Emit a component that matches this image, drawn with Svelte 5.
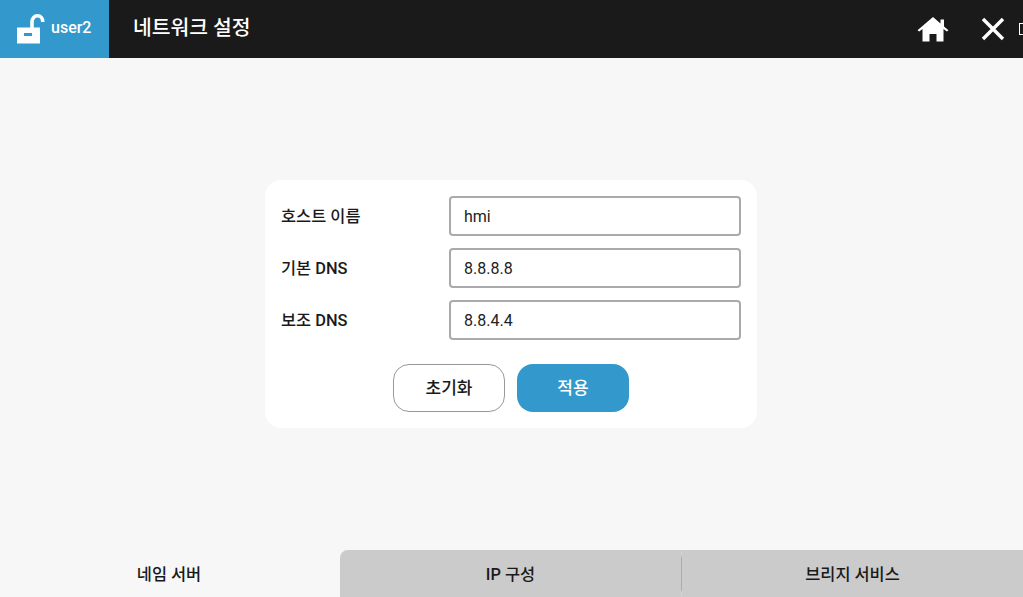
<script>
  let host = $state('hmi');
  let dns1 = $state('8.8.8.8');
  let dns2 = $state('8.8.4.4');
</script>

<div class="page">
  <header class="top">
    <div class="user">
      <svg class="lock" width="28" height="30" viewBox="0 0 28 30">
        <path d="M0 13.500h23v16H0z" fill="#fff"/>
        <path d="M15 14V8C15 4 17.500 1.800 20.500 1.800S25.800 4 25.800 8" fill="none" stroke="#fff" stroke-width="3.600"/>
        <rect x="7" y="19" width="8" height="3" fill="#3399cc"/>
      </svg>
      <span class="name">user2</span>
    </div>
    <h1>네트워크 설정</h1>
    <div class="actions">
      <svg class="home" width="32" height="26" viewBox="0 0 32 26">
        <path d="M16 1 L23.500 7.500V3.500h3.500v7L31.500 14.300 29.800 15.500 26.500 13V25.500H19.500V18h-7v7.500H5.500V13L2.200 15.500 0.500 14.300Z" fill="#fff"/>
      </svg>
      <svg class="close" width="24" height="24" viewBox="0 0 24 24">
        <path d="M2 2L22 22M22 2L2 22" stroke="#fff" stroke-width="3.400" fill="none"/>
      </svg>
      <span class="tofu"></span>
    </div>
  </header>

  <main class="content">
    <form class="card">
      <label class="row"><span>호스트 이름</span><input bind:value={host} /></label>
      <label class="row"><span>기본 DNS</span><input bind:value={dns1} /></label>
      <label class="row"><span>보조 DNS</span><input bind:value={dns2} /></label>
      <div class="buttons">
        <button type="button" class="btn reset">초기화</button>
        <button type="button" class="btn apply">적용</button>
      </div>
    </form>
  </main>

  <nav class="tabs">
    <div class="tab active">네임 서버</div>
    <div class="rest">
      <div class="tab">IP 구성</div>
      <div class="tab">브리지 서비스</div>
    </div>
  </nav>
</div>

<style>
  :global(body) {
    margin: 0;
    overflow: hidden;
    background: #f7f7f7;
  }
  .page {
    width: 1023px;
    height: 597px;
    display: flex;
    flex-direction: column;
    font-family: Roboto, "Noto Sans CJK KR", sans-serif;
    color: #1a1a1a;
    overflow: hidden;
  }
  .top {
    height: 58px;
    flex: none;
    background: #1a1a1a;
    display: flex;
    align-items: center;
    color: #fff;
  }
  .user {
    width: 109px;
    height: 100%;
    background: #3399cc;
    display: flex;
    align-items: center;
    box-sizing: border-box;
    padding-left: 17px;
    flex: none;
  }
  .lock { flex: none; }
  .name {
    font-size: 16px;
    font-weight: 500;
    margin-left: 6px;
    margin-top: -4px;
  }
  h1 {
    margin: 0 0 2px 24px;
    font-size: 20.400px;
    font-weight: 500;
    line-height: 1;
  }
  .actions {
    margin-left: auto;
    display: flex;
    align-items: center;
    height: 100%;
  }
  .home { margin-right: 32px; }
  .close { margin-right: 14px; }
  .tofu {
    width: 4px;
    height: 10px;
    border: 1px solid #fff;
    margin-right: -2px;
    flex: none;
  }
  .content {
    flex: 1;
    display: flex;
    justify-content: center;
    padding: 122px 1px 0 0;
    box-sizing: border-box;
  }
  .card {
    width: 492px;
    height: 248px;
    background: #fff;
    border-radius: 16px;
    box-sizing: border-box;
    padding: 16px;
    display: flex;
    flex-direction: column;
    gap: 12px;
  }
  .row {
    display: flex;
    align-items: center;
    justify-content: space-between;
    height: 40px;
    font-size: 16.400px;
    font-weight: 500;
  }
  .row span { margin-top: -3px; }
  .row input {
    width: 292px;
    height: 40px;
    box-sizing: border-box;
    border: 2px solid #aaa;
    border-radius: 4px;
    padding: 0 13px;
    font: 400 16px Roboto, sans-serif;
    color: #222;
    outline: none;
    background: #fff;
  }
  .buttons {
    display: flex;
    justify-content: center;
    gap: 12px;
    margin-top: 12px;
  }
  .btn {
    width: 112px;
    height: 48px;
    border-radius: 16px;
    font: 500 17px Roboto, "Noto Sans CJK KR", sans-serif;
    padding: 0 0 3px;
  }
  .reset { background: #fff; border: 1px solid #999; color: #1a1a1a; }
  .apply { background: #3399cc; border: none; color: #fff; }
  .tabs {
    height: 47px;
    flex: none;
    display: flex;
  }
  .tab {
    display: flex;
    align-items: center;
    justify-content: center;
    font-size: 16.400px;
    font-weight: 500;
    flex: 1;
    padding-bottom: 1px;
    box-sizing: border-box;
  }
  .tab.active { width: 340px; flex: none; padding-right: 2px; }
  .rest {
    flex: 1;
    display: flex;
    background: #cbcbcb;
    border-top-left-radius: 8px;
  }
  .rest .tab + .tab {
    border-left: 1px solid;
    border-image: linear-gradient(to bottom, #cbcbcb 4%, #d8d8d8 10%, #ababab 20%, #ababab 82%, #d8d8d8 90%, #cbcbcb 100%) 1;
  }
</style>
